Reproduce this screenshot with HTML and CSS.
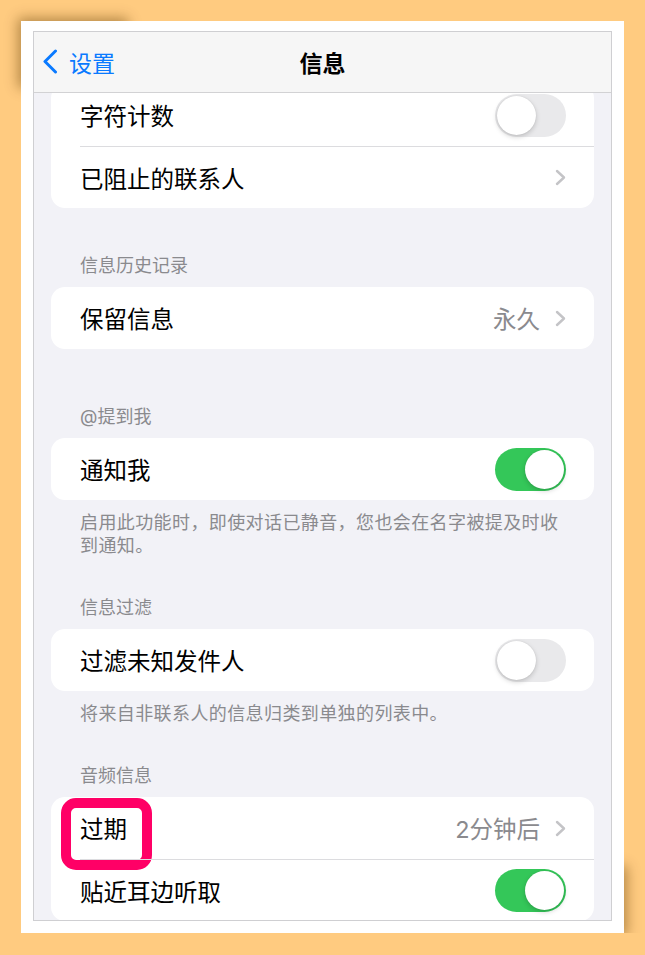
FILE: index.html
```html
<!DOCTYPE html>
<html lang="zh-CN">
<head>
    <meta charset="UTF-8">
    <meta name="viewport" content="width=device-width, initial-scale=1.0">
    <title>信息</title>
    <link rel="stylesheet" href="styles.css">
</head>
<body>

    <div class="frame">
        <div class="phone">

            <!-- Navigation bar -->
            <header class="nav">
                <a class="nav-back" href="#">
                    <svg class="nav-chevron" width="16" height="25" viewBox="0 0 16 25">
                        <polyline points="13.5,2 3,12.5 13.5,23" fill="none" stroke="#0a7aff" stroke-width="3" stroke-linecap="round" stroke-linejoin="round"/>
                    </svg>
                    <span>设置</span>
                </a>
                <h1 class="nav-title">信息</h1>
                <span></span>
            </header>

            <main class="content">

                <!-- Top group, scrolled under the bar -->
                <div class="group group-first">
                    <div class="row">
                        <div class="row-inner">
                            <span class="row-label">字符计数</span>
                            <span class="toggle"></span>
                        </div>
                    </div>
                    <div class="row">
                        <div class="row-inner">
                            <span class="row-label">已阻止的联系人</span>
                            <span class="row-value">
                                <svg class="chevron" width="11" height="17" viewBox="0 0 11 17">
                                    <polyline points="2,2 9,8.5 2,15" fill="none" stroke="#c4c4c7" stroke-width="2.4" stroke-linecap="round" stroke-linejoin="round"/>
                                </svg>
                            </span>
                        </div>
                    </div>
                </div>

                <!-- Message history -->
                <section class="section section-history">
                    <div class="section-header">信息历史记录</div>
                    <div class="group">
                        <div class="row">
                            <div class="row-inner">
                                <span class="row-label">保留信息</span>
                                <span class="row-value">永久
                                    <svg class="chevron" width="11" height="17" viewBox="0 0 11 17">
                                        <polyline points="2,2 9,8.5 2,15" fill="none" stroke="#c4c4c7" stroke-width="2.4" stroke-linecap="round" stroke-linejoin="round"/>
                                    </svg>
                                </span>
                            </div>
                        </div>
                    </div>
                </section>

                <!-- Mentions -->
                <section class="section section-mentions">
                    <div class="section-header">@提到我</div>
                    <div class="group">
                        <div class="row">
                            <div class="row-inner">
                                <span class="row-label">通知我</span>
                                <span class="toggle on"></span>
                            </div>
                        </div>
                    </div>
                    <p class="section-footer">启用此功能时，即使对话已静音，您也会在名字被提及时收到通知。</p>
                </section>

                <!-- Filtering -->
                <section class="section section-after-footer">
                    <div class="section-header">信息过滤</div>
                    <div class="group">
                        <div class="row">
                            <div class="row-inner">
                                <span class="row-label">过滤未知发件人</span>
                                <span class="toggle"></span>
                            </div>
                        </div>
                    </div>
                    <p class="section-footer">将来自非联系人的信息归类到单独的列表中。</p>
                </section>

                <!-- Audio messages -->
                <section class="section section-after-footer">
                    <div class="section-header">音频信息</div>
                    <div class="group">
                        <div class="row row-marked">
                            <div class="row-inner">
                                <span class="row-label">过期</span>
                                <span class="row-value">2分钟后
                                    <svg class="chevron" width="11" height="17" viewBox="0 0 11 17">
                                        <polyline points="2,2 9,8.5 2,15" fill="none" stroke="#c4c4c7" stroke-width="2.4" stroke-linecap="round" stroke-linejoin="round"/>
                                    </svg>
                                </span>
                            </div>
                            <span class="highlight"></span>
                        </div>
                        <div class="row">
                            <div class="row-inner">
                                <span class="row-label">贴近耳边听取</span>
                                <span class="toggle on"></span>
                            </div>
                        </div>
                    </div>
                </section>

            </main>
        </div>
    </div>

</body>
</html>
```

FILE: styles.css
```css
/* Global Styles */
body {
    margin: 0;
    background-color: #ffcb80;
    font-family: "Inter", "Noto Sans CJK SC", sans-serif;
    color: #000;
}

/* Photo frame */
.frame {
    position: relative;
    width: 603px;
    height: 912px;
    margin: 21px 0 0 21px;
    padding: 10px 12px 12px 12px;
    box-sizing: border-box;
    background-color: #ffffff;
}

.frame::before,
.frame::after {
    content: "";
    position: absolute;
    z-index: -1;
    width: 110px;
    height: 70px;
}

.frame::before {
    top: 4px;
    left: 4px;
    box-shadow: -7px -7px 12px rgba(90, 55, 0, 0.45);
}

.frame::after {
    bottom: 4px;
    right: 4px;
    box-shadow: 7px 7px 12px rgba(90, 55, 0, 0.45);
}

/* Screenshot */
.phone {
    height: 100%;
    border: 1px solid #cfcfd2;
    box-sizing: border-box;
    background-color: #f2f2f7;
    display: flex;
    flex-direction: column;
    overflow: hidden;
}

/* Navigation bar */
.nav {
    height: 61px;
    flex-shrink: 0;
    box-sizing: border-box;
    border-bottom: 1px solid #d2d2d4;
    background-color: #f6f6f6;
    display: grid;
    grid-template-columns: 1fr auto 1fr;
    align-items: center;
    padding: 0 8px;
}

.nav-back {
    display: flex;
    align-items: center;
    gap: 11px;
    color: #0a7aff;
    text-decoration: none;
    font-size: 23px;
    margin-top: -1px;
}

.nav-title {
    margin: 0;
    font-size: 23px;
    font-weight: 700;
}

/* Content */
.content {
    flex: 1;
    overflow: hidden;
}

.group {
    margin: 0 17px;
    background-color: #ffffff;
    border-radius: 14px;
    overflow: hidden;
}

.group-first {
    margin-top: -9px;
}

.section {
    margin-top: 47px;
}

.section-mentions {
    margin-top: 57px;
}

.section-after-footer {
    margin-top: 40px;
}

.section-header {
    padding: 0 0 10px 46px;
    font-size: 18px;
    line-height: 22px;
    color: #8a8a8e;
}

.section-footer {
    margin: 0;
    padding: 11px 50px 0 46px;
    font-size: 18px;
    line-height: 23px;
    letter-spacing: 0.4px;
    color: #8a8a8e;
}

/* Rows */
.row {
    position: relative;
    display: flex;
    padding-left: 29px;
}

.row-inner {
    flex: 1;
    height: 62px;
    box-sizing: border-box;
    display: flex;
    align-items: center;
    justify-content: space-between;
    padding-right: 28px;
}

.row + .row .row-inner {
    border-top: 1px solid #dcdcdf;
}

.row-label {
    font-size: 23.5px;
}

.row-value {
    display: flex;
    align-items: center;
    font-size: 23.5px;
    color: #8a8a8e;
}

.chevron {
    margin-left: 15px;
}

/* Toggle switch */
.toggle {
    position: relative;
    width: 71px;
    height: 43px;
    border-radius: 22px;
    background-color: #e9e9eb;
}

.toggle::after {
    content: "";
    position: absolute;
    top: 2px;
    left: 2px;
    width: 39px;
    height: 39px;
    border-radius: 50%;
    background-color: #ffffff;
    box-shadow: 0 2px 5px rgba(0, 0, 0, 0.18), 0 0 1px rgba(0, 0, 0, 0.15);
}

.toggle.on {
    background-color: #34c759;
}

.toggle.on::after {
    left: 30px;
}

/* Annotation box */
.highlight {
    position: absolute;
    top: 1px;
    left: 10px;
    width: 91px;
    height: 72px;
    box-sizing: border-box;
    border: 10px solid #ff0066;
    border-radius: 15px;
}
```
